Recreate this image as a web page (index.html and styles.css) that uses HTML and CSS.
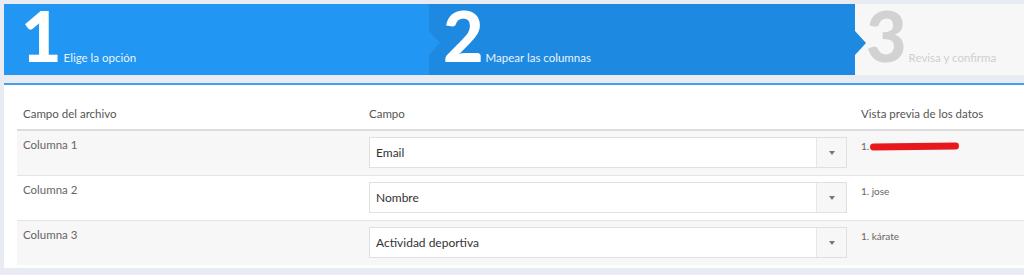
FILE: index.html
```html
<!DOCTYPE html>
<html lang="es">
<head>
<meta charset="utf-8">
<title>Importar</title>
<link rel="stylesheet" href="styles.css">
</head>
<body>
<div class="page">
  <div class="steps">
    <div class="step step-1">
      <span class="num">1</span><span class="label">Elige la opción</span>
    </div>
    <div class="step step-2">
      <span class="num">2</span><span class="label">Mapear las columnas</span>
    </div>
    <div class="step step-3">
      <span class="num">3</span><span class="label">Revisa y confirma</span>
    </div>
  </div>
  <div class="panel">
    <table class="map">
      <thead>
        <tr>
          <th class="c1">Campo del archivo</th>
          <th class="c2">Campo</th>
          <th class="c3">Vista previa de los datos</th>
        </tr>
      </thead>
      <tbody>
        <tr class="odd">
          <td class="c1">Columna 1</td>
          <td class="c2"><div class="select"><span class="val">Email</span><span class="btn"><span class="caret"></span></span></div></td>
          <td class="c3"><span class="prev">1.<span class="redact"></span></span></td>
        </tr>
        <tr>
          <td class="c1">Columna 2</td>
          <td class="c2"><div class="select"><span class="val">Nombre</span><span class="btn"><span class="caret"></span></span></div></td>
          <td class="c3"><span class="prev">1. jose</span></td>
        </tr>
        <tr class="odd">
          <td class="c1">Columna 3</td>
          <td class="c2"><div class="select"><span class="val">Actividad deportiva</span><span class="btn"><span class="caret"></span></span></div></td>
          <td class="c3"><span class="prev">1. kárate</span></td>
        </tr>
      </tbody>
    </table>
  </div>
</div>
</body>
</html>
```

FILE: styles.css
```css
* { box-sizing: border-box; }
html, body { margin: 0; padding: 0; }
body {
  background: #e8ebf2;
  font-family: "Lato", "Open Sans", "Liberation Sans", sans-serif;
  width: 1024px;
  height: 275px;
  overflow: hidden;
}
.page {
  padding: 4px 0 0 4px;
}
.steps {
  display: flex;
  height: 71px;
}
.step {
  position: relative;
  display: flex;
  align-items: baseline;
  padding-left: 17px;
  line-height: 1;
}
.step-1 { width: 425px; background: #2196f3; z-index: 2; }
.step-2 { width: 426px; background: #1e89e0; padding-left: 14px; z-index: 1; }
.step-3 { flex: 1; background: #f7f7f7; padding-left: 11px; }
.step-1::after, .step-2::after {
  content: "";
  position: absolute;
  top: 27px;
  right: -11px;
  width: 0;
  height: 0;
  border-top: 12px solid transparent;
  border-bottom: 12px solid transparent;
  border-left: 11px solid #2196f3;
}
.step-2::after { border-left-color: #1e89e0; }
.num {
  font-size: 70px;
  font-weight: 900;
  color: #ffffff;
  line-height: 62px;
}
.label {
  font-size: 11.5px;
  color: #eaf4fe;
  margin-left: 2px;
}
.step-3 .num { color: #d2d2d2; }
.step-3 .label { color: #cfcfcf; }
.panel {
  margin-top: 8px;
  background: #ffffff;
  border-top: 2px solid #42a1ec;
  padding: 14px 0 3px 13px;
}
.map {
  width: 100%;
  border-collapse: collapse;
  table-layout: fixed;
}
.map th, .map td {
  text-align: left;
  vertical-align: top;
  padding: 6px 6px 7px;
  font-size: 11.5px;
  line-height: 18px;
}
.map th {
  font-weight: 400;
  color: #555;
  border-bottom: 2px solid #dddddd;
  padding-bottom: 6px;
}
.map .c1 { width: 346px; }
.map .c2 { width: 492px; padding-right: 8px; }
.map td.c1 { color: #666; padding-top: 5px; }
.map tbody tr { border-top: 1px solid #e4e4e4; }
.map tbody tr:first-child { border-top: 0; }
.map tbody tr.odd { background: #f7f7f7; }
.select {
  display: flex;
  height: 31px;
  border: 1px solid #e0e0e0;
  background: #ffffff;
}
.val {
  flex: 1;
  padding: 0 6px;
  line-height: 29px;
  font-size: 12px;
  color: #333;
}
.btn {
  width: 30px;
  border-left: 1px solid #e6e6e6;
  background: #f7f7f7;
  display: flex;
  align-items: center;
  justify-content: center;
}
.caret {
  width: 0;
  height: 0;
  border-left: 3.5px solid transparent;
  border-right: 3.5px solid transparent;
  border-top: 4px solid #777;
}
.prev {
  display: inline-flex;
  align-items: center;
  font-size: 10px;
  color: #666;
  line-height: 14px;
  margin-top: 1px;
}
.redact {
  display: inline-block;
  width: 89px;
  height: 7px;
  margin-left: 1px;
  background: #e8191c;
  border-radius: 4px;
  transform: rotate(-0.6deg);
}
```
